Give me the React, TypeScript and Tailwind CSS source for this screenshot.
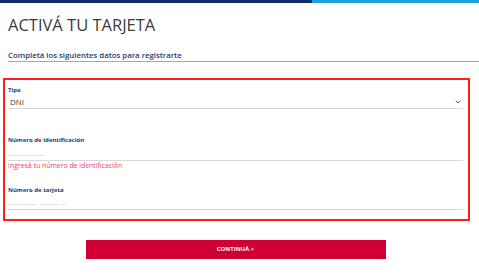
// Activá tu tarjeta – form screen

function Field({
  label,
  children,
  className = "",
}: {
  label: string;
  children: React.ReactNode;
  className?: string;
}) {
  return (
    <div className={`flex flex-col ${className}`}>
      <span className="text-[6px] font-bold leading-[8px] text-[#1f3b73]">{label}</span>
      {children}
    </div>
  );
}

export default function App() {
  return (
    <div className="relative h-[279px] w-[479px] overflow-hidden bg-white font-['Open_Sans',sans-serif]">
      {/* top stripe */}
      <div className="flex h-[3px]">
        <div className="w-[312px] bg-[#0c2d6b]" />
        <div className="flex-1 bg-[#1aa2de]" />
      </div>

      <h1 className="pl-[8px] pt-[12px] text-[16.5px] leading-[20px] text-[#3b3b3b]">
        ACTIVÁ TU TARJETA
      </h1>

      <div className="mt-[15px] ml-[8px] border-b border-[#a8a8a8] pb-[1px] text-[7.8px] font-semibold leading-[10px] text-[#1f3b73]">
        Completá los siguientes datos para registrarte
      </div>

      {/* form box */}
      <div className="ml-[3px] mt-[16px] h-[143px] w-[467px] border-2 border-[#ff1f1f] pl-[3px] pr-[5px] pt-[6px]">
        <Field label="Tipo">
          <div className="mt-[3px] box-content flex h-[10px] items-center justify-between border-b border-[#d8d8d8] pb-[1px] pl-[2px]">
            <span className="text-[8px] leading-[10px] text-[#3b3b3b]">DNI</span>
            <svg width="6" height="4" viewBox="0 0 6 4" className="mr-[2px]">
              <path d="M0.8 0.8 L3 3 L5.2 0.8" fill="none" stroke="#555" strokeWidth="1" />
            </svg>
          </div>
        </Field>

        <Field label="Número de identificación" className="mt-[27px]">
          <div className="mt-[7px] box-content flex h-[8px] items-center border-b border-[#d8d8d8] pb-[1px]">
            <div className="h-[1px] w-[36px] bg-[#e3e3e3]" />
          </div>
          <span className="text-[6.9px] leading-[9px] text-[#e8436a]">
            Ingresá tu número de identificación
          </span>
        </Field>

        <Field label="Número de tarjeta" className="mt-[16px]">
          <div className="mt-[6px] box-content flex h-[8px] items-center gap-[2px] border-b border-[#d8d8d8] pb-[1px]">
            <div className="h-[1px] w-[9px] bg-[#e3e3e3]" />
            <div className="h-[1px] w-[17px] bg-[#e3e3e3]" />
            <div className="ml-[2px] h-[1px] w-[19px] bg-[#e3e3e3]" />
            <div className="h-[1px] w-[5px] bg-[#e3e3e3]" />
          </div>
        </Field>
      </div>

      <div className="mt-[19px] flex justify-center">
        <button className="ml-[-8px] flex h-[19px] w-[300px] items-center justify-center bg-[#d00034] text-[6px] font-bold text-white">
          CONTINUÁ &gt;
        </button>
      </div>
    </div>
  );
}
